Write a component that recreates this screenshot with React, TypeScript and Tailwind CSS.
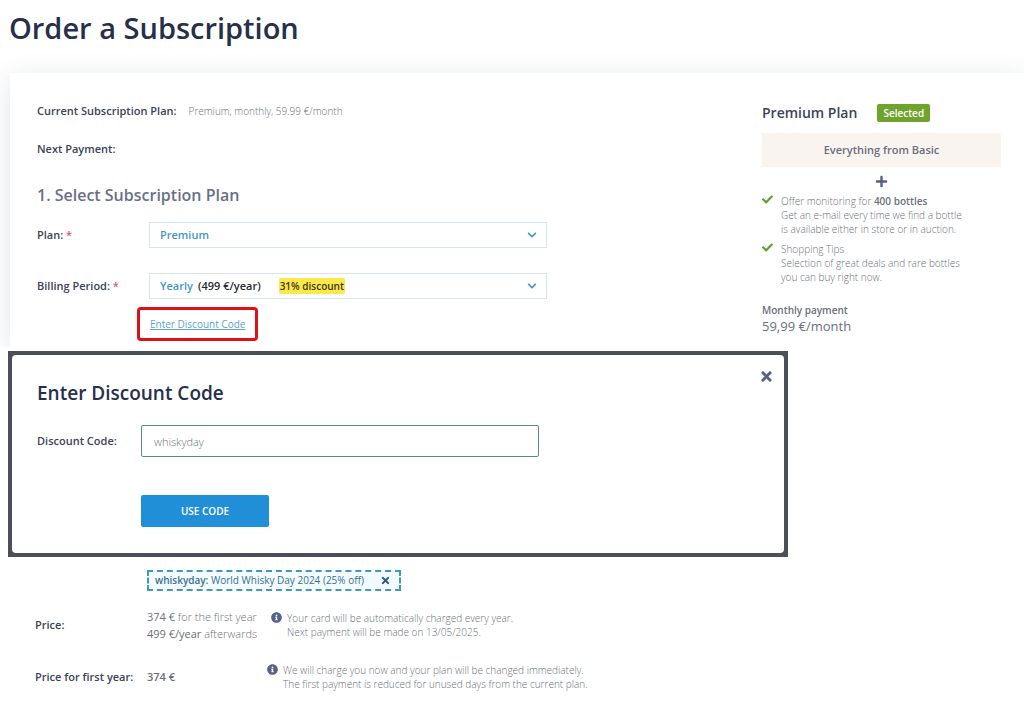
import type { ReactNode } from "react";
import { FaCheck, FaChevronDown, FaInfoCircle, FaPlus, FaTimes } from "react-icons/fa";

const features = [
  {
    title: (
      <>
        Offer monitoring for <b className="font-semibold">400 bottles</b>
      </>
    ),
    lines: ["Get an e-mail every time we find a bottle", "is available either in store or in auction."],
  },
  {
    title: "Shopping Tips",
    lines: ["Selection of great deals and rare bottles", "you can buy right now."],
  },
];

export default function App() {
  return (
    <main className="min-h-screen bg-white pb-6 font-['Open_Sans',sans-serif] text-[11px] text-[#6b6f7d]">
      <h1 className="px-[9px] pt-1.5 text-[29px] leading-[44px] font-semibold text-[#26304a]">Order a Subscription</h1>

      <div className="overflow-hidden pt-[23px] pl-2.5">
        <section className="flex justify-between gap-8 bg-white pr-[23px] pb-1.5 pl-[27px] shadow-[0_4px_24px_rgba(40,60,90,0.13)]">
          <SubscriptionForm />
          <PlanSummary />
        </section>
      </div>

      <DiscountDialog />
      <PriceOverview />
    </main>
  );
}

function SubscriptionForm() {
  return (
    <form className="min-w-0 grow pt-7">
      <dl className="grid gap-[18px] leading-5">
        <div className="flex gap-3">
          <dt className="font-semibold text-[#3c4358]">Current Subscription Plan:</dt>
          <dd className="text-[10px] font-light">Premium, monthly, 59.99 €/month</dd>
        </div>
        <div className="flex gap-3">
          <dt className="font-semibold text-[#3c4358]">Next Payment:</dt>
          <dd />
        </div>
      </dl>

      <h2 className="mt-[22px] mb-[13px] text-base leading-7 font-semibold text-[#6a6f88]">
        1. Select Subscription Plan
      </h2>

      <div className="grid gap-[25px]">
        <SelectField id="plan" label="Plan:" options={["Premium", "Basic"]} />
        <SelectField id="period" label="Billing Period:" options={["Yearly", "Monthly"]}>
          <span className="pl-[49px] font-semibold text-[#2b2b33]">(499 €/year)</span>
          <span className="ml-[18px] rounded-xs bg-[#fde84c] px-px text-[10px] leading-4 font-semibold text-[#3a3718]">
            31% discount
          </span>
        </SelectField>
      </div>

      <div className="mt-2 ml-[100px] flex">
        <span className="rounded-sm border-3 border-[#dd1219] px-2.5 py-1">
          <a href="#discount" className="text-[10px] leading-5 text-[#5da3cf] underline">
            Enter Discount Code
          </a>
        </span>
      </div>
    </form>
  );
}

function SelectField({
  id,
  label,
  options,
  children,
}: {
  id: string;
  label: string;
  options: string[];
  children?: ReactNode;
}) {
  return (
    <div className="flex items-center">
      <label htmlFor={id} className="w-28 shrink-0 font-semibold text-[#3c4358]">
        {label} <span className="text-[#e0566a]">*</span>
      </label>
      <div className="grid w-full max-w-[398px] items-center">
        <select
          id={id}
          className="col-start-1 row-start-1 h-[26px] w-full appearance-none border border-[#d8e6ec] bg-white pl-2.5 font-semibold text-[#4795c8]"
        >
          {options.map((option) => (
            <option key={option}>{option}</option>
          ))}
        </select>
        <div className="pointer-events-none col-start-1 row-start-1 flex items-center pr-2.5">
          {children}
          <FaChevronDown size={10} className="ml-auto text-[#4795c8]" />
        </div>
      </div>
    </div>
  );
}

function PlanSummary() {
  return (
    <aside className="w-[239px] shrink-0 pt-[30px]">
      <div className="flex items-center gap-5">
        <h2 className="text-sm leading-5 font-semibold text-[#3c4358]">Premium Plan</h2>
        <span className="rounded-xs bg-[#6ea32c] px-1.5 text-[10px] leading-[18px] font-semibold text-white">
          Selected
        </span>
      </div>
      <p className="mt-2.5 bg-[#faf4f0] text-center text-[11px] leading-[34px] font-semibold text-[#6b6f7d]">
        Everything from Basic
      </p>
      <FaPlus size={13} className="mx-auto mt-2 mb-1.5 text-[#56618a]" />
      <ul className="grid gap-1.5 text-[10px] leading-[14px] font-light">
        {features.map((feature) => (
          <li key={feature.lines[0]} className="flex gap-2">
            <FaCheck size={11} className="shrink-0 text-[#5d9e35]" />
            <div>
              <p>{feature.title}</p>
              {feature.lines.map((line) => (
                <p key={line}>{line}</p>
              ))}
            </div>
          </li>
        ))}
      </ul>
      <p className="mt-[18px] text-[10px] leading-4 font-semibold">Monthly payment</p>
      <p className="text-[13px] leading-4">59,99 €/month</p>
    </aside>
  );
}

function DiscountDialog() {
  return (
    <div className="mt-1 ml-2 max-w-[780px] bg-[#4d4f58] p-1">
      <section
        id="discount"
        role="dialog"
        aria-labelledby="discount-title"
        className="rounded-sm bg-white pt-3.5 pr-2.5 pb-[26px] pl-[25px]"
      >
        <div className="flex items-start justify-between">
          <h2 id="discount-title" className="pt-2.5 text-[19px] leading-7 font-semibold text-[#26304a]">
            Enter Discount Code
          </h2>
          <button type="button" aria-label="Close" className="text-[#56618a]">
            <FaTimes size={15} />
          </button>
        </div>
        <div className="mt-[18px] flex items-center">
          <label htmlFor="code" className="w-[104px] shrink-0 font-semibold text-[#3c4358]">
            Discount Code:
          </label>
          <input
            id="code"
            type="text"
            defaultValue="whiskyday"
            className="h-8 w-full max-w-[398px] rounded-xs border border-[#5b8795] px-3 font-light text-[#6b6f7d]"
          />
        </div>
        <button
          type="button"
          className="mt-[38px] ml-[104px] block h-8 w-32 rounded-xs bg-[#218fd8] text-[10px] font-semibold text-white"
        >
          USE CODE
        </button>
      </section>
    </div>
  );
}

function PriceOverview() {
  return (
    <section className="pt-[13px] pl-[35px]">
      <div className="ml-28 flex">
        <div className="flex items-center gap-4 border-2 border-dashed border-[#4099b8] bg-[#f4fbff] pr-2 pl-1.5 text-[#35718f]">
          <p className="text-[10px] leading-[17px]">
            <b className="font-semibold">whiskyday:</b> World Whisky Day 2024 (25% off)
          </p>
          <button type="button" aria-label="Remove code" className="text-[#265f82]">
            <FaTimes size={11} />
          </button>
        </div>
      </div>

      <div className="mt-[17px] flex items-center">
        <h3 className="w-28 shrink-0 font-semibold text-[#3c4358]">Price:</h3>
        <p className="leading-[17px] font-light">
          <span className="font-normal">374 €</span> for the first year
          <br />
          <span className="font-normal">499 €/year</span> afterwards
        </p>
        <Note className="ml-3.5">
          Your card will be automatically charged every year.
          <br />
          Next payment will be made on 13/05/2025.
        </Note>
      </div>

      <div className="mt-[21px] flex items-center">
        <h3 className="w-28 shrink-0 font-semibold text-[#3c4358]">Price for first year:</h3>
        <p className="w-[120px] font-semibold">374 €</p>
        <Note>
          We will charge you now and your plan will be changed immediately.
          <br />
          The first payment is reduced for unused days from the current plan.
        </Note>
      </div>
    </section>
  );
}

function Note({ children, className = "" }: { children: ReactNode; className?: string }) {
  return (
    <div className={`flex gap-[5px] text-[10px] leading-[14px] font-light ${className}`}>
      <FaInfoCircle size={11} className="mt-px shrink-0 text-[#56618a]" />
      <p>{children}</p>
    </div>
  );
}
